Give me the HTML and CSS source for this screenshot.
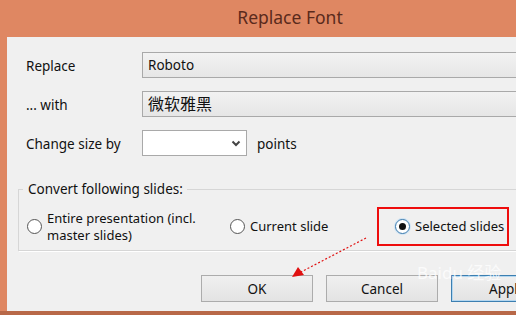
FILE: index.html
```html
<!DOCTYPE html>
<html lang="en">
<head>
    <meta charset="UTF-8">
    <title>Replace Font</title>
    <link rel="stylesheet" href="styles.css">
</head>
<body>
    <div class="titlebar">Replace Font</div>
    <div class="dialog">
        <div class="row">
            <label class="label">Replace</label>
            <div class="field">Roboto</div>
        </div>
        <div class="row">
            <label class="label">... with</label>
            <div class="field cjk">微软雅黑</div>
        </div>
        <div class="row">
            <label class="label">Change size by</label>
            <div class="select">
                <svg width="10" height="7" viewBox="0 0 10 7"><path d="M1.5 1.5 L5 5 L8.5 1.5" fill="none" stroke="#444" stroke-width="2"/></svg>
            </div>
            <span class="unit">points</span>
        </div>

        <fieldset class="group">
            <legend>Convert following slides:</legend>
            <div class="options">
                <div class="option first">
                    <span class="radio"></span>
                    <span>Entire presentation (incl.<br>master slides)</span>
                </div>
                <div class="option second">
                    <span class="radio"></span>
                    <span>Current slide</span>
                </div>
                <div class="option marked">
                    <span class="radio checked"></span>
                    <span>Selected slides</span>
                </div>
            </div>
        </fieldset>

        <div class="buttons">
            <button class="btn">OK</button>
            <button class="btn">Cancel</button>
            <button class="btn default">Apply</button>
        </div>

        <!-- annotation arrow -->
        <svg class="arrow" width="90" height="50" viewBox="0 0 90 50">
            <line x1="79" y1="2" x2="14" y2="36" stroke="#e01010" stroke-width="1.2" stroke-dasharray="2 2"/>
            <path d="M5 41 L11 31 L17 39 Z" fill="#e01010"/>
        </svg>
        <div class="watermark">Baidu 经验</div>
    </div>
    <div class="bottom"></div>
</body>
</html>
```

FILE: styles.css
```css
body {
    margin: 0;
    width: 516px;
    height: 315px;
    overflow: hidden;
    background-color: #df8762;
    font-family: "Noto Sans", "Noto Sans CJK SC", sans-serif;
    font-size: 13px;
    color: #111;
}

.titlebar {
    height: 37px;
    box-sizing: border-box;
    display: flex;
    align-items: center;
    justify-content: center;
    padding: 0 0 3px 64px;
    font-size: 17.5px;
    color: #5a2a1c;
}

.dialog {
    position: relative;
    margin-left: 7px;
    width: 560px;
    height: 274px;
    background-color: #f0f0f0;
    padding-top: 15px;
    box-sizing: border-box;
}

.row {
    display: flex;
    align-items: center;
    padding-left: 19px;
    height: 26px;
    margin-bottom: 13px;
    font-size: 13.5px;
}

.label {
    width: 116px;
    padding-top: 2px;
}

.field {
    width: 420px;
    height: 26px;
    box-sizing: border-box;
    border: 1px solid #a9a9a9;
    background: linear-gradient(#f2f2f2, #e6e6e6);
    padding-left: 5px;
    line-height: 24px;
}

.cjk {
    font-size: 16px;
}

.select {
    width: 105px;
    height: 26px;
    box-sizing: border-box;
    border: 1px solid #a9a9a9;
    background-color: #fff;
    display: flex;
    align-items: center;
    justify-content: flex-end;
    padding-right: 5px;
}

.unit {
    margin-left: 10px;
    padding-top: 2px;
}

.group {
    margin: 24px 0 0 11px;
    padding: 0;
    height: 71px;
    box-sizing: border-box;
    border: 1px solid #d6d6d6;
    box-shadow: 1px 1px 0 #fff;
}

.group legend {
    padding: 0 4px 0 5px;
    margin-left: 4px;
    font-size: 13.5px;
}

.options {
    display: flex;
    align-items: center;
    height: 52px;
    padding-top: 5px;
    box-sizing: border-box;
}

.option {
    display: flex;
    align-items: center;
    line-height: 17px;
    white-space: nowrap;
}

.option .radio {
    margin-right: 5px;
}

.first {
    margin-left: 8px;
    width: 203px;
}

.second {
    width: 147px;
}

.marked {
    width: 132px;
    height: 39px;
    box-sizing: border-box;
    border: 2px solid #ee0d0d;
    padding-left: 16px;
}

.radio {
    width: 13px;
    height: 13px;
    border: 1px solid #555;
    border-radius: 50%;
    background-color: #fff;
    flex-shrink: 0;
    position: relative;
}

.radio.checked {
    border-color: #3d7bad;
    box-shadow: 0 0 0 1px #cfe3f3;
}

.radio.checked::after {
    content: "";
    position: absolute;
    left: 3px;
    top: 3px;
    width: 7px;
    height: 7px;
    border-radius: 50%;
    background-color: #111;
}

.buttons {
    display: flex;
    gap: 13px;
    margin: 24px 0 0 194px;
}

.btn {
    width: 112px;
    height: 27px;
    font-family: inherit;
    font-size: 13.5px;
    color: #111;
    border: 1px solid #acacac;
    background: linear-gradient(#f0f0f0, #e3e3e3);
    padding: 0;
}

.btn.default {
    border-color: #3c7fb1;
    box-shadow: inset 0 0 0 1px #b4d7f0;
    text-align: left;
    padding-left: 37px;
}

.arrow {
    position: absolute;
    left: 280px;
    top: 199px;
}

.watermark {
    position: absolute;
    left: 410px;
    top: 222px;
    color: rgba(255, 255, 255, 0.75);
    font-size: 17px;
}

.bottom {
    height: 4px;
    background-color: #b86848;
}
```
